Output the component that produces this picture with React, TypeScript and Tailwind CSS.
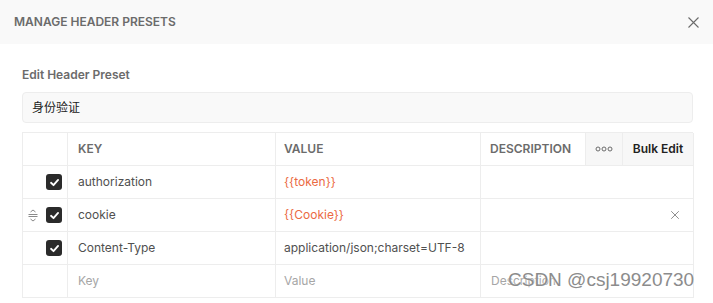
import { X } from 'lucide-react'

const rows = [
  { key: 'authorization', value: '{{token}}', variable: true, handle: false, remove: false },
  { key: 'cookie', value: '{{Cookie}}', variable: true, handle: true, remove: true },
  { key: 'Content-Type', value: 'application/json;charset=UTF-8', variable: false, handle: false, remove: false },
]

function Checkbox() {
  return (
    <div className="w-4 h-4 rounded-[3px] bg-[#2b2b2b] flex items-center justify-center">
      <svg width="11" height="11" viewBox="0 0 12 12" fill="none">
        <path d="M2.2 6.3 L4.9 8.9 L9.9 3.2" stroke="#fff" strokeWidth="2" strokeLinecap="round" strokeLinejoin="round" />
      </svg>
    </div>
  )
}

function DragHandle() {
  return (
    <svg width="10" height="13" viewBox="0 0 10 13" fill="none" className="text-[#8a8a8a]">
      <path d="M2.5 3 L5 1 L7.5 3" stroke="currentColor" strokeWidth="1" />
      <path d="M0.5 5.5 H9.5 M0.5 7.5 H9.5" stroke="currentColor" strokeWidth="1" />
      <path d="M2.5 10 L5 12 L7.5 10" stroke="currentColor" strokeWidth="1" />
    </svg>
  )
}

function Dots() {
  return (
    <svg width="18" height="6" viewBox="0 0 18 6" fill="none">
      <circle cx="3" cy="3" r="2" stroke="#6b6b6b" strokeWidth="1" />
      <circle cx="9" cy="3" r="2" stroke="#6b6b6b" strokeWidth="1" />
      <circle cx="15" cy="3" r="2" stroke="#6b6b6b" strokeWidth="1" />
    </svg>
  )
}

const grid = 'grid grid-cols-[45px_208px_205px_105px_37px_71px]'
const cell = 'h-[33px] border-r border-b border-[#ededed] flex items-center'

export default function App() {
  return (
    <div
      className="relative w-[713px] h-[303px] bg-white overflow-hidden"
      style={{ fontFamily: 'Inter, "Noto Sans CJK SC", sans-serif' }}
    >
      {/* modal header */}
      <div className="h-[44px] bg-[#f9f9f9] flex items-center justify-between pl-[14px] pr-[14px]">
        <span className="text-[12px] font-semibold text-[#6b6b6b]">MANAGE HEADER PRESETS</span>
        <svg width="11" height="11" viewBox="0 0 11 11" fill="none">
          <path d="M0.5 0.5 L10.5 10.5 M10.5 0.5 L0.5 10.5" stroke="#6b6b6b" strokeWidth="1.1" />
        </svg>
      </div>

      <div className="pl-[22px] pr-[20px]">
        <div className="mt-[23px] text-[12px] font-semibold text-[#6b6b6b] leading-[16px]">Edit Header Preset</div>

        <div className="mt-[9px] h-[31px] rounded-[4px] border border-[#ededed] bg-[#f9f9f9] flex items-center px-[9px] text-[12px] text-[#212121]">
          身份验证
        </div>

        {/* header table */}
        <div className="mt-[9px] border-l border-t border-[#ededed]">
          <div className={grid}>
            <div className={cell} />
            <div className={`${cell} pl-[10px] text-[12px] font-semibold text-[#6b6b6b]`}>KEY</div>
            <div className={`${cell} pl-[8px] text-[12px] font-semibold text-[#6b6b6b]`}>VALUE</div>
            <div className={`${cell} pl-[9px] text-[12px] font-semibold text-[#6b6b6b]`}>DESCRIPTION</div>
            <div className={`${cell} justify-center bg-[#f7f7f7]`}>
              <Dots />
            </div>
            <div className={`${cell} justify-center bg-[#f7f7f7] text-[12px] font-semibold text-[#212121]`}>Bulk Edit</div>
          </div>

          {rows.map((r) => (
            <div key={r.key} className={grid}>
              <div className={`${cell} justify-end pr-[5px] gap-[8px]`}>
                {r.handle && <DragHandle />}
                <Checkbox />
              </div>
              <div className={`${cell} pl-[10px] text-[12px] text-[#505050]`}>{r.key}</div>
              <div className={`${cell} pl-[8px] text-[12px] ${r.variable ? 'text-[#eb6a43]' : 'text-[#505050]'}`}>
                {r.value}
              </div>
              <div className={`${cell} col-span-3 justify-end pr-[11px]`}>
                {r.remove && <X className="w-[14px] h-[14px] text-[#6b6b6b]" strokeWidth={1.3} />}
              </div>
            </div>
          ))}

          <div className={grid}>
            <div className={cell} />
            <div className={`${cell} pl-[10px] text-[12px] text-[#a6a6a6]`}>Key</div>
            <div className={`${cell} pl-[8px] text-[12px] text-[#a6a6a6]`}>Value</div>
            <div className={`${cell} col-span-3 pl-[10px] text-[12px] text-[#a6a6a6]`}>Description</div>
          </div>
        </div>
      </div>

      {/* watermark */}
      <div
        className="absolute left-[508px] top-[268px] text-[19px] text-[#8c8c8c] leading-[24px] whitespace-nowrap"
        style={{ fontFamily: '"Liberation Sans", Arial, sans-serif', textShadow: '0 0 2px #fff' }}
      >
        CSDN @csj19920730
      </div>
    </div>
  )
}
